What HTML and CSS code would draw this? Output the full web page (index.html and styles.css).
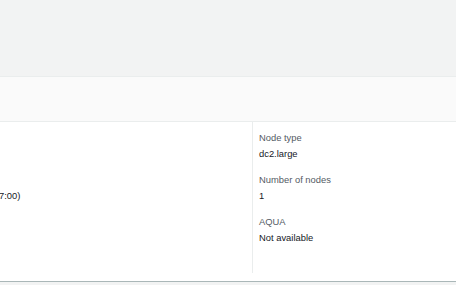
FILE: index.html
```html
<!DOCTYPE html>
<html>
<head>
<meta charset="utf-8">
<link rel="stylesheet" href="styles.css">
</head>
<body>
<div class="page">
  <div class="top"></div>
  <div class="card">
    <div class="card-header"></div>
    <div class="card-body">
      <div class="col col-left">
        <div class="pair spacer"></div>
        <div class="pair"><div class="value shifted">7:00)</div></div>
      </div>
      <div class="col col-right">
        <div class="pair">
          <div class="label">Node type</div>
          <div class="value">dc2.large</div>
        </div>
        <div class="pair">
          <div class="label">Number of nodes</div>
          <div class="value">1</div>
        </div>
        <div class="pair">
          <div class="label">AQUA</div>
          <div class="value">Not available</div>
        </div>
      </div>
    </div>
  </div>
</div>
</body>
</html>
```
FILE: styles.css
```css
html, body {
  margin: 0;
  padding: 0;
  background: #f2f3f3;
  font-family: "Liberation Sans", Arial, sans-serif;
}
.page {
  width: 456px;
  height: 285px;
  overflow: hidden;
}
.top {
  height: 76px;
  background: #f2f3f3;
}
.card {
  background: #fff;
  border-top: 1px solid #eaeded;
  border-bottom: 1px solid #aab7b8;
}
.card-header {
  height: 44px;
  background: #fafafa;
  border-bottom: 1px solid #eaeded;
}
.card-body {
  display: grid;
  grid-template-columns: 252px 1fr;
  padding: 0 0 8px 0;
  height: 151px;
}
.col-right {
  border-left: 1px solid #eaeded;
  padding: 8px 0 0 6px;
}
.col-left {
  padding: 8px 0 0 0;
}
.pair {
  height: 42px;
}
.label {
  font-size: 9.4px;
  line-height: 16px;
  color: #545b64;
}
.value {
  font-size: 9.4px;
  line-height: 16px;
  color: #16191f;
}
.spacer {
  height: 58px;
}
.shifted {
  margin-left: -1px;
}
```
